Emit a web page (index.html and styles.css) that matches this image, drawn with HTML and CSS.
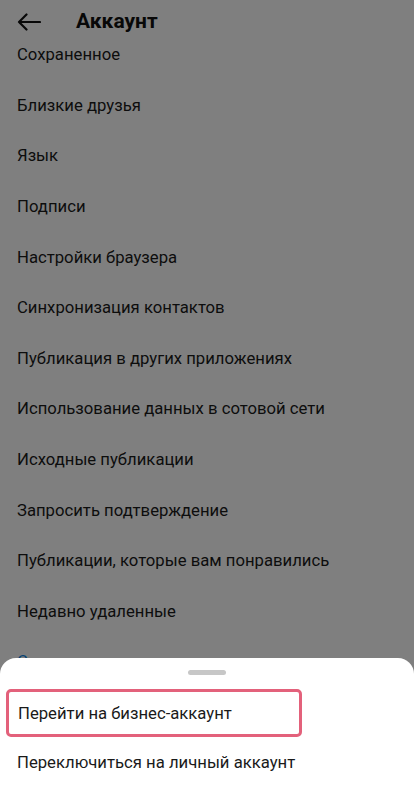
FILE: index.html
```html
<!DOCTYPE html>
<html lang="ru">
<head>
<meta charset="utf-8">
<link rel="stylesheet" href="styles.css">
</head>
<body>
<div class="screen">
  <header class="topbar">
    <svg class="back" width="24" height="18" viewBox="0 0 24 18"><path d="M23 9H2M9.5 1.5L2 9l7.5 7.5" fill="none" stroke="#111" stroke-width="2.2" stroke-linecap="round" stroke-linejoin="round"/></svg>
    <h1 class="title">Аккаунт</h1>
  </header>
  <ul class="list">
    <li>Сохраненное</li>
    <li>Близкие друзья</li>
    <li>Язык</li>
    <li>Подписи</li>
    <li>Настройки браузера</li>
    <li>Синхронизация контактов</li>
    <li>Публикация в других приложениях</li>
    <li>Использование данных в сотовой сети</li>
    <li>Исходные публикации</li>
    <li>Запросить подтверждение</li>
    <li>Публикации, которые вам понравились</li>
    <li>Недавно удаленные</li>
    <li class="blue">Сменить тип аккаунта</li>
  </ul>
  <div class="overlay"></div>
  <div class="sheet">
    <div class="handle"></div>
    <div class="option selected">Перейти на бизнес-аккаунт</div>
    <div class="option">Переключиться на личный аккаунт</div>
  </div>
</div>
</body>
</html>
```
FILE: styles.css
```css
* { box-sizing: border-box; }
html, body { margin: 0; padding: 0; }
body {
  font-family: Roboto, "Noto Sans", sans-serif;
  color: #1a1a1a;
  background: #fff;
  overflow: hidden;
}
.screen {
  position: relative;
  width: 414px;
  height: 800px;
  overflow: hidden;
  background: #fff;
}
.topbar {
  position: relative;
  z-index: 1;
  height: 42px;
  background: #fff;
  display: flex;
  align-items: center;
  padding: 0 0 0 17px;
}
.back { display: block; margin-top: 1px; }
.title {
  margin: 0 0 0 35px;
  font-size: 21px;
  font-weight: 700;
  color: #111;
  line-height: 1;
}
.list {
  list-style: none;
  margin: -12.5px 0 0;
  padding: 0;
}
.list li {
  height: 50.6px;
  display: flex;
  align-items: center;
  padding-left: 17px;
  font-size: 16.7px;
  color: #1a1a1a;
  white-space: nowrap;
}
.list li.blue { color: #0a84e6; }
.overlay {
  position: absolute;
  inset: 0;
  background: rgba(0, 0, 0, 0.5);
  z-index: 2;
}
.sheet {
  position: absolute;
  left: 0;
  right: 0;
  top: 658px;
  bottom: 0;
  z-index: 3;
  background: #fff;
  border-radius: 16px 16px 0 0;
  padding: 12px 0 0;
  display: flex;
  flex-direction: column;
}
.handle {
  width: 38px;
  height: 5px;
  border-radius: 3px;
  background: #c7c7c7;
  align-self: center;
}
.option {
  height: 48px;
  display: flex;
  align-items: center;
  padding-left: 17px;
  font-size: 16.7px;
  color: #1a1a1a;
}
.option.selected {
  margin: 14px 0 0 6px;
  width: 296px;
  padding-left: 9px;
  border: 3px solid #e3617b;
  border-radius: 5px;
}
.option + .option { margin-top: 1px; }
```
